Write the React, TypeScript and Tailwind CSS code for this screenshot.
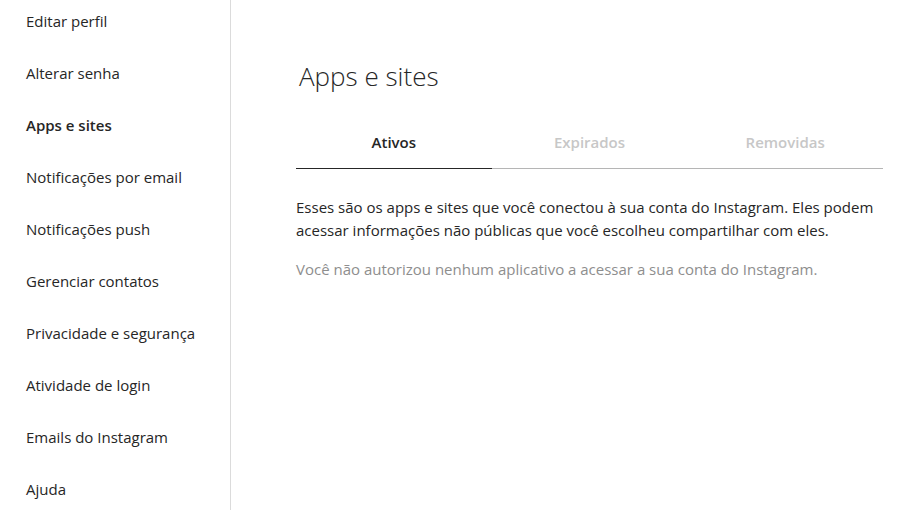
const menu = [
  "Editar perfil",
  "Alterar senha",
  "Apps e sites",
  "Notificações por email",
  "Notificações push",
  "Gerenciar contatos",
  "Privacidade e segurança",
  "Atividade de login",
  "Emails do Instagram",
  "Ajuda",
];

const tabs = ["Ativos", "Expirados", "Removidas"];

export default function App() {
  const active = "Apps e sites";

  return (
    <div
      className="flex h-[510px] w-[919px] overflow-hidden bg-white text-[#262626]"
      style={{ fontFamily: '"Open Sans", "Noto Sans", sans-serif' }}
    >
      {/* Sidebar */}
      <nav className="w-[231px] shrink-0 border-r border-[#dbdbdb]">
        <ul className="-mt-[5px]">
          {menu.map((item) => (
            <li
              key={item}
              className={`py-4 pl-[26px] text-[15px] leading-5 ${
                item === active ? "font-semibold" : "font-normal"
              }`}
            >
              {item}
            </li>
          ))}
        </ul>
      </nav>

      {/* Content */}
      <main className="flex-1 pl-[65px] pr-[36px] pt-[58px]">
        <h1 className="pl-[3px] text-[26px] font-light leading-9">Apps e sites</h1>

        <div className="mt-[22px] flex border-b border-[#b5b5b5]">
          {tabs.map((tab, i) => (
            <div
              key={tab}
              className={`-mb-px flex-1 border-b pt-4 pb-4 text-center text-[15px] font-semibold leading-5 ${
                i === 0 ? "border-[#262626] text-[#262626]" : "border-transparent text-[#c7c7c7]"
              }`}
            >
              {tab}
            </div>
          ))}
        </div>

        <p className="mt-[27px] text-[15px] leading-[23px]">
          Esses são os apps e sites que você conectou à sua conta do Instagram. Eles podem
          <br />
          acessar informações não públicas que você escolheu compartilhar com eles.
        </p>

        <p className="mt-4 text-[15px] leading-[23px] text-[#8e8e8e]">
          Você não autorizou nenhum aplicativo a acessar a sua conta do Instagram.
        </p>
      </main>
    </div>
  );
}
